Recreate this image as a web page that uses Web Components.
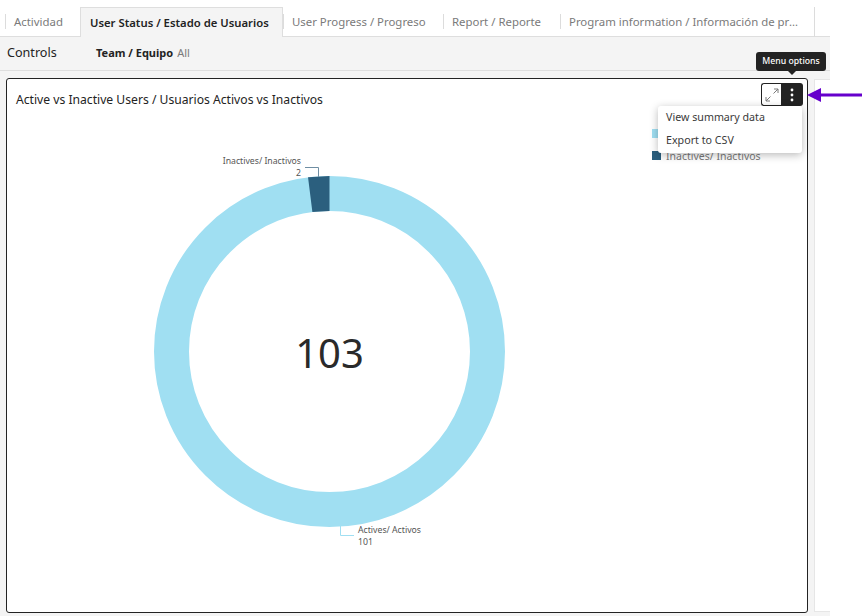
<!DOCTYPE html>
<html>
<head>
<meta charset="utf-8">
<title>Users</title>
<style>
  html, body { margin: 0; background: #fff; font-family: "Noto Sans", "Open Sans", sans-serif; }
</style>
</head>
<body>
<qs-app>
  <qs-tabs slot="tabs">
    <qs-tab w="75">Actividad</qs-tab>
    <qs-tab w="203" active>User Status / Estado de Usuarios</qs-tab>
    <qs-tab w="160">User Progress / Progreso</qs-tab>
    <qs-tab w="117">Report / Reporte</qs-tab>
    <qs-tab w="255" last>Program information / Información de programa</qs-tab>
  </qs-tabs>
  <qs-controls slot="controls" name="Team / Equipo" value="All"></qs-controls>
  <qs-donut-card slot="sheet" card-title="Active vs Inactive Users / Usuarios Activos vs Inactivos"></qs-donut-card>
</qs-app>

<script>
// App shell: tab bar, controls bar, grey sheet
class QsApp extends HTMLElement {
  constructor() {
    super();
    this.attachShadow({ mode: "open" });
    this.shadowRoot.innerHTML = `
      <style>
        :host { display: flex; flex-direction: column; width: 830px; height: 616px; }
        .sheet { flex: 1; display: flex; gap: 6px; padding: 7px 0 0 6px; background: #f4f4f4; min-height: 0; }
        .next { flex: 1; height: 531px; margin-top: 1px; background: #fff; border: 1px solid #e6e6e6; border-right: 0; }
      </style>
      <slot name="tabs"></slot>
      <slot name="controls"></slot>
      <div class="sheet">
        <slot name="sheet"></slot>
        <div class="next"></div>
      </div>
    `;
  }
}

class QsTabs extends HTMLElement {
  constructor() {
    super();
    this.attachShadow({ mode: "open" });
    this.shadowRoot.innerHTML = `
      <style>
        :host { display: flex; height: 36px; padding-left: 5px; background: #fff; border-bottom: 1px solid #dedede; }
        ::slotted(*) { flex: none; }
      </style>
      <slot></slot>
    `;
  }
}

class QsTab extends HTMLElement {
  constructor() {
    super();
    this.attachShadow({ mode: "open" });
    this.shadowRoot.innerHTML = `
      <style>
        :host { display: block; box-sizing: border-box; height: 37px; padding-top: 7px; font-size: 11.4px; color: #7a7a7a; }
        .box { display: flex; align-items: center; box-sizing: border-box; width: 100%; height: 100%; padding-bottom: 1px; }
        .label { flex: 1; min-width: 0; height: 15px; line-height: 15px; padding: 0 9px 0 8px; border-left: 1px solid #dcdcdc; white-space: nowrap; overflow: hidden; text-overflow: ellipsis; }
        :host([active]) .box { background: #f4f4f4; border: 1px solid #dedede; border-bottom: 0; }
        :host([active]) .label { border-left: 0; padding: 0 9px; color: #232323; font-size: 11.3px; font-weight: 600; }
        :host([last]) .box { border-right: 1px solid #dcdcdc; }
        :host([last]) .label { padding-right: 14px; }
      </style>
      <div class="box"><div class="label"><slot></slot></div></div>
    `;
    this.style.width = this.getAttribute("w") + "px";
  }
}

class QsControls extends HTMLElement {
  constructor() {
    super();
    this.attachShadow({ mode: "open" });
    this.shadowRoot.innerHTML = `
      <style>
        :host { display: flex; align-items: center; box-sizing: border-box; height: 34px; padding: 0 0 2px 7px; background: #f4f4f4; border-bottom: 1px solid #dedede; }
        .title { width: 89px; font-size: 12.6px; color: #232323; }
        .name { font-size: 11px; font-weight: 700; color: #232323; margin-right: 4px; }
        .value { font-size: 11px; color: #7a7a7a; }
      </style>
      <span class="title">Controls</span>
      <span class="name">${this.getAttribute("name")}</span>
      <span class="value">${this.getAttribute("value")}</span>
    `;
  }
}

// Visual card with the donut chart, legend, toolbar and the open menu
class QsDonutCard extends HTMLElement {
  constructor() {
    super();
    this.attachShadow({ mode: "open" });
    this.shadowRoot.innerHTML = `
      <style>
        :host { display: block; flex: none; position: relative; width: 802px; height: 535px; box-sizing: border-box; background: #fff; border: 1px solid #232323; border-radius: 3px; }
        .head { display: flex; align-items: flex-start; box-sizing: border-box; height: 41px; padding: 4px 4px 0 9px; }
        .title { flex: 1; margin-top: 8px; font-size: 12.15px; color: #232323; white-space: nowrap; }
        .tools { display: flex; height: 23px; }
        .tools div { display: flex; align-items: center; justify-content: center; box-sizing: border-box; height: 23px; }
        .expand { width: 20px; background: #fff; border: 1px solid #232323; border-right: 0; border-radius: 3px 0 0 3px; }
        .more { width: 22px; background: #232323; border-radius: 0 3px 3px 0; }
        .body { display: flex; }
        svg.chart { display: block; flex: none; }
        .legend { margin: 2px 0 0 7px; font-size: 10.5px; color: #7a7a7a; }
        .item { display: flex; align-items: center; gap: 5px; height: 23px; white-space: nowrap; }
        .item:last-child { transform: translateY(-1px); }
        .swatch { flex: none; width: 9px; height: 9px; }
        .tip { position: absolute; left: 749px; top: -27px; width: 70px; height: 19px; line-height: 18px; text-align: center; font-size: 8.7px; font-weight: 500; color: #fff; background: #232323; border-radius: 3px; }
        .tip::after { content: ""; position: absolute; left: 32px; top: 19px; border: 4px solid transparent; border-top-color: #232323; border-bottom: 0; }
        .menu { position: absolute; left: 651px; top: 27px; width: 144px; height: 47px; background: #fff; border-radius: 3px; box-shadow: 0 2px 8px rgba(0,0,0,.28); font-size: 10.7px; color: #3a3a3a; }
        .menu span { display: block; height: 23px; line-height: 22px; padding-left: 8px; }
        .pointer { position: absolute; left: 800px; top: 8px; }
      </style>
      <div class="head">
        <div class="title">${this.getAttribute("card-title")}</div>
        <div class="tools">
          <div class="expand">
            <svg width="14" height="14" viewBox="0 0 14 14" fill="none" stroke="#7a7a7a" stroke-width="1"><path d="M8.5 5.5 13 1M9 1h4v4M5.5 8.5 1 13M1 9v4h4"/></svg>
          </div>
          <div class="more">
            <svg width="4" height="14" viewBox="0 0 4 14" fill="#fff"><circle cx="2" cy="2" r="1.4"/><circle cx="2" cy="7" r="1.4"/><circle cx="2" cy="12" r="1.4"/></svg>
          </div>
        </div>
      </div>
      <div class="body">
        <svg class="chart" width="638" height="490" viewBox="7 120 638 490">
          <circle cx="329.5" cy="351.5" r="158" fill="none" stroke="#a0dff2" stroke-width="35"/>
          <path d="M308 177.3 329.5 176 329.5 211 312.4 212Z" fill="#2b5f7e"/>
          <path d="M305 167.5H318.5V177" fill="none" stroke="#6f8ea3" stroke-width="1"/>
          <path d="M340.5 525V535.5H354" fill="none" stroke="#a0dff2" stroke-width="1"/>
          <text x="329.5" y="368" text-anchor="middle" font-size="40" fill="#2a2a2a">103</text>
          <g font-size="8.7" fill="#555">
            <text x="301" y="164" text-anchor="end">Inactives/ Inactivos</text>
            <text x="301" y="176" text-anchor="end">2</text>
            <text x="358" y="533">Actives/ Activos</text>
            <text x="358" y="545">101</text>
          </g>
        </svg>
        <div class="legend">
          <div class="item"><span class="swatch" style="background:#a0dff2"></span>Actives/ Activos</div>
          <div class="item"><span class="swatch" style="background:#2b5f7e"></span>Inactives/ Inactivos</div>
        </div>
      </div>
      <div class="tip">Menu options</div>
      <div class="menu"><span>View summary data</span><span>Export to CSV</span></div>
      <svg class="pointer" width="55" height="16" viewBox="0 0 55 16"><path d="M0 8 14 1V6.5H55V9.5H14V15Z" fill="#6600cc"/></svg>
    `;
  }
}

customElements.define("qs-app", QsApp);
customElements.define("qs-tabs", QsTabs);
customElements.define("qs-tab", QsTab);
customElements.define("qs-controls", QsControls);
customElements.define("qs-donut-card", QsDonutCard);
</script>
</body>
</html>
